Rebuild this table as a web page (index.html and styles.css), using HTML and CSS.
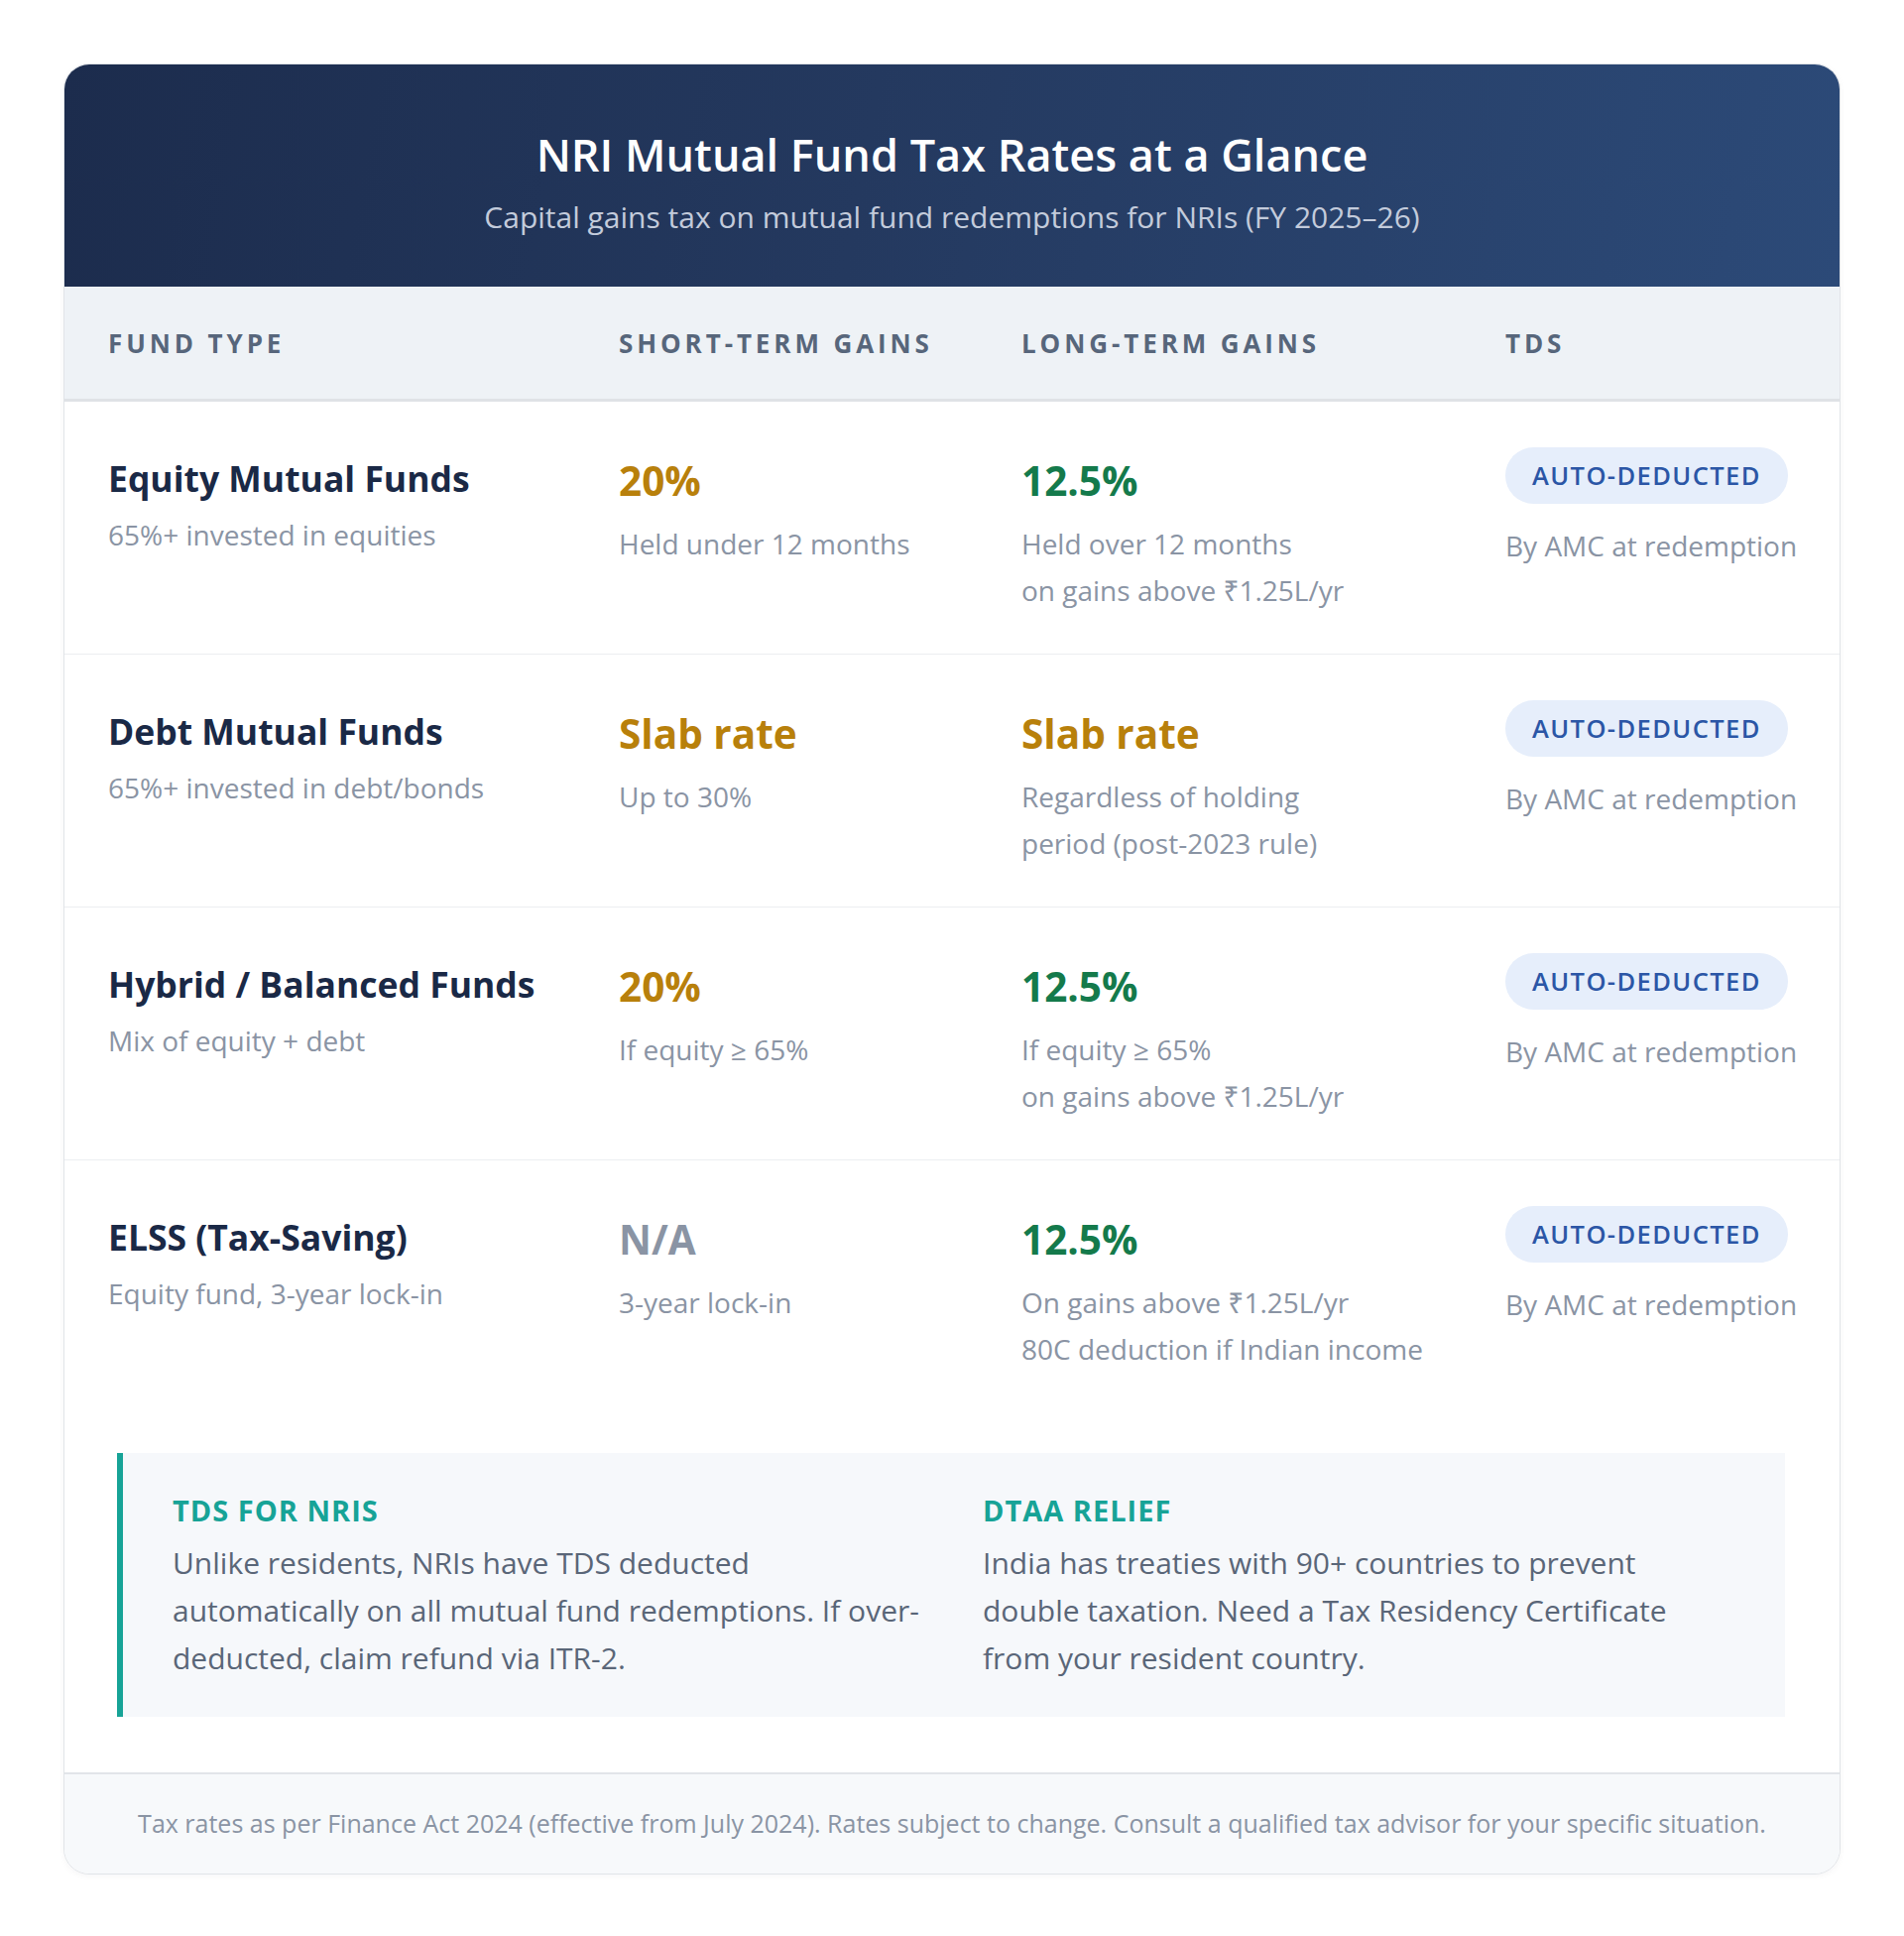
FILE: index.html
```html
<!DOCTYPE html>
<html lang="en">
<head>
<meta charset="utf-8">
<title>NRI Mutual Fund Tax Rates at a Glance</title>
<link rel="stylesheet" href="styles.css">
</head>
<body>
<div class="card">
  <header class="hero">
    <h1 class="hero-title">NRI Mutual Fund Tax Rates at a Glance</h1>
    <p class="hero-sub">Capital gains tax on mutual fund redemptions for NRIs (FY 2025–26)</p>
  </header>

  <div class="table">
    <div class="thead">
      <div class="th">Fund Type</div>
      <div class="th">Short-Term Gains</div>
      <div class="th">Long-Term Gains</div>
      <div class="th">TDS</div>
    </div>

    <div class="tr">
      <div class="td">
        <div class="fund-name">Equity Mutual Funds</div>
        <div class="fund-desc">65%+ invested in equities</div>
      </div>
      <div class="td">
        <div class="rate gold">20%</div>
        <div class="note-text">Held under 12 months</div>
      </div>
      <div class="td">
        <div class="rate green">12.5%</div>
        <div class="note-text">Held over 12 months<br>on gains above ₹1.25L/yr</div>
      </div>
      <div class="td">
        <span class="badge">AUTO-DEDUCTED</span>
        <div class="tds-text">By AMC at redemption</div>
      </div>
    </div>

    <div class="tr">
      <div class="td">
        <div class="fund-name">Debt Mutual Funds</div>
        <div class="fund-desc">65%+ invested in debt/bonds</div>
      </div>
      <div class="td">
        <div class="rate gold">Slab rate</div>
        <div class="note-text">Up to 30%</div>
      </div>
      <div class="td">
        <div class="rate gold">Slab rate</div>
        <div class="note-text">Regardless of holding<br>period (post-2023 rule)</div>
      </div>
      <div class="td">
        <span class="badge">AUTO-DEDUCTED</span>
        <div class="tds-text">By AMC at redemption</div>
      </div>
    </div>

    <div class="tr">
      <div class="td">
        <div class="fund-name">Hybrid / Balanced Funds</div>
        <div class="fund-desc">Mix of equity + debt</div>
      </div>
      <div class="td">
        <div class="rate gold">20%</div>
        <div class="note-text">If equity ≥ 65%</div>
      </div>
      <div class="td">
        <div class="rate green">12.5%</div>
        <div class="note-text">If equity ≥ 65%<br>on gains above ₹1.25L/yr</div>
      </div>
      <div class="td">
        <span class="badge">AUTO-DEDUCTED</span>
        <div class="tds-text">By AMC at redemption</div>
      </div>
    </div>

    <div class="tr last">
      <div class="td">
        <div class="fund-name">ELSS (Tax-Saving)</div>
        <div class="fund-desc">Equity fund, 3-year lock-in</div>
      </div>
      <div class="td">
        <div class="rate muted">N/A</div>
        <div class="note-text">3-year lock-in</div>
      </div>
      <div class="td">
        <div class="rate green">12.5%</div>
        <div class="note-text">On gains above ₹1.25L/yr<br>80C deduction if Indian income</div>
      </div>
      <div class="td">
        <span class="badge">AUTO-DEDUCTED</span>
        <div class="tds-text">By AMC at redemption</div>
      </div>
    </div>
  </div>

  <section class="info">
    <div class="info-box">
      <div class="info-col">
        <div class="info-label">TDS for NRIs</div>
        <p class="info-body">Unlike residents, NRIs have TDS deducted<br>automatically on all mutual fund redemptions. If over-<br>deducted, claim refund via ITR-2.</p>
      </div>
      <div class="info-col">
        <div class="info-label">DTAA Relief</div>
        <p class="info-body">India has treaties with 90+ countries to prevent<br>double taxation. Need a Tax Residency Certificate<br>from your resident country.</p>
      </div>
    </div>
  </section>

  <footer class="foot">
    Tax rates as per Finance Act 2024 (effective from July 2024). Rates subject to change. Consult a qualified tax advisor for your specific situation.
  </footer>
</div>
</body>
</html>
```

FILE: styles.css
```css
* { box-sizing: border-box; }

html, body {
  margin: 0;
  background: #ffffff;
}

body {
  padding: 64px;
  font-family: "Open Sans", "Noto Sans", "Liberation Sans", sans-serif;
  color: #1a2946;
}

.card {
  border: 1px solid #e1e4e8;
  border-radius: 26px;
  overflow: hidden;
  background: #ffffff;
  box-shadow: 0 2px 6px rgba(15, 30, 60, 0.04);
}

/* Header */
.hero {
  background: linear-gradient(100deg, #1c2c4d 0%, #24395f 45%, #2c4a78 100%);
  text-align: center;
  padding: 60px 40px 50px;
}

.hero-title {
  margin: 0;
  font-size: 45px;
  line-height: 61px;
  font-weight: 600;
  color: #ffffff;
}

.hero-sub {
  margin: 13px 0 0;
  font-size: 30px;
  line-height: 40px;
  color: #c3cbdb;
}

/* Table */
.thead,
.tr {
  display: grid;
  grid-template-columns: 515px 406px 488px 1fr;
}

.thead {
  background: #eef2f6;
  border-bottom: 3px solid #dfe2e6;
}

.th {
  padding: 41px 0 39px 44px;
  font-size: 26px;
  line-height: 33px;
  font-weight: 700;
  letter-spacing: 3.9px;
  text-transform: uppercase;
  color: #57667b;
}

.tr {
  border-bottom: 1px solid #eceef1;
}

.tr.last {
  border-bottom: none;
}

.td {
  padding: 46px 0 40px 44px;
  min-height: 254px;
}

.fund-name {
  font-size: 35.5px;
  line-height: 62px;
  font-weight: 700;
  color: #1a2946;
}

.fund-desc {
  margin-top: 3px;
  font-size: 28px;
  line-height: 46px;
  color: #8a94a4;
}

.rate {
  margin-top: 4px;
  font-size: 40.5px;
  line-height: 60px;
  font-weight: 700;
}

.gold { color: #b8800b; }
.green { color: #147a4b; }
.muted { color: #8a94a4; }

.note-text {
  margin-top: 10px;
  font-size: 28px;
  line-height: 47px;
  color: #8a94a4;
}

.badge {
  display: inline-block;
  height: 57px;
  line-height: 57px;
  padding: 0 27px;
  border-radius: 29px;
  background: #e6eefb;
  color: #2b56a6;
  font-size: 25.5px;
  font-weight: 600;
  letter-spacing: 1.4px;
}

.tds-text {
  margin-top: 19px;
  font-size: 28px;
  line-height: 46px;
  color: #8a94a4;
}

/* Info */
.info {
  padding: 41px 55px 56px 53px;
}

.info-box {
  display: grid;
  grid-template-columns: 1fr 1fr;
  column-gap: 58px;
  background: #f6f8fb;
  border-left: 6px solid #17a397;
  padding: 40px 50px 35px 50px;
}

.info-label {
  font-size: 29px;
  line-height: 36px;
  font-weight: 700;
  letter-spacing: 1px;
  text-transform: uppercase;
  color: #17a397;
}

.info-body {
  margin: 11px 0 0;
  font-size: 30px;
  line-height: 48px;
  color: #5a6678;
  white-space: nowrap;
}

/* Footer */
.foot {
  background: #f7f9fb;
  border-top: 2px solid #e2e5e9;
  text-align: center;
  padding: 32px 40px 34px;
  font-size: 25px;
  line-height: 34px;
  color: #8a94a4;
}
```
